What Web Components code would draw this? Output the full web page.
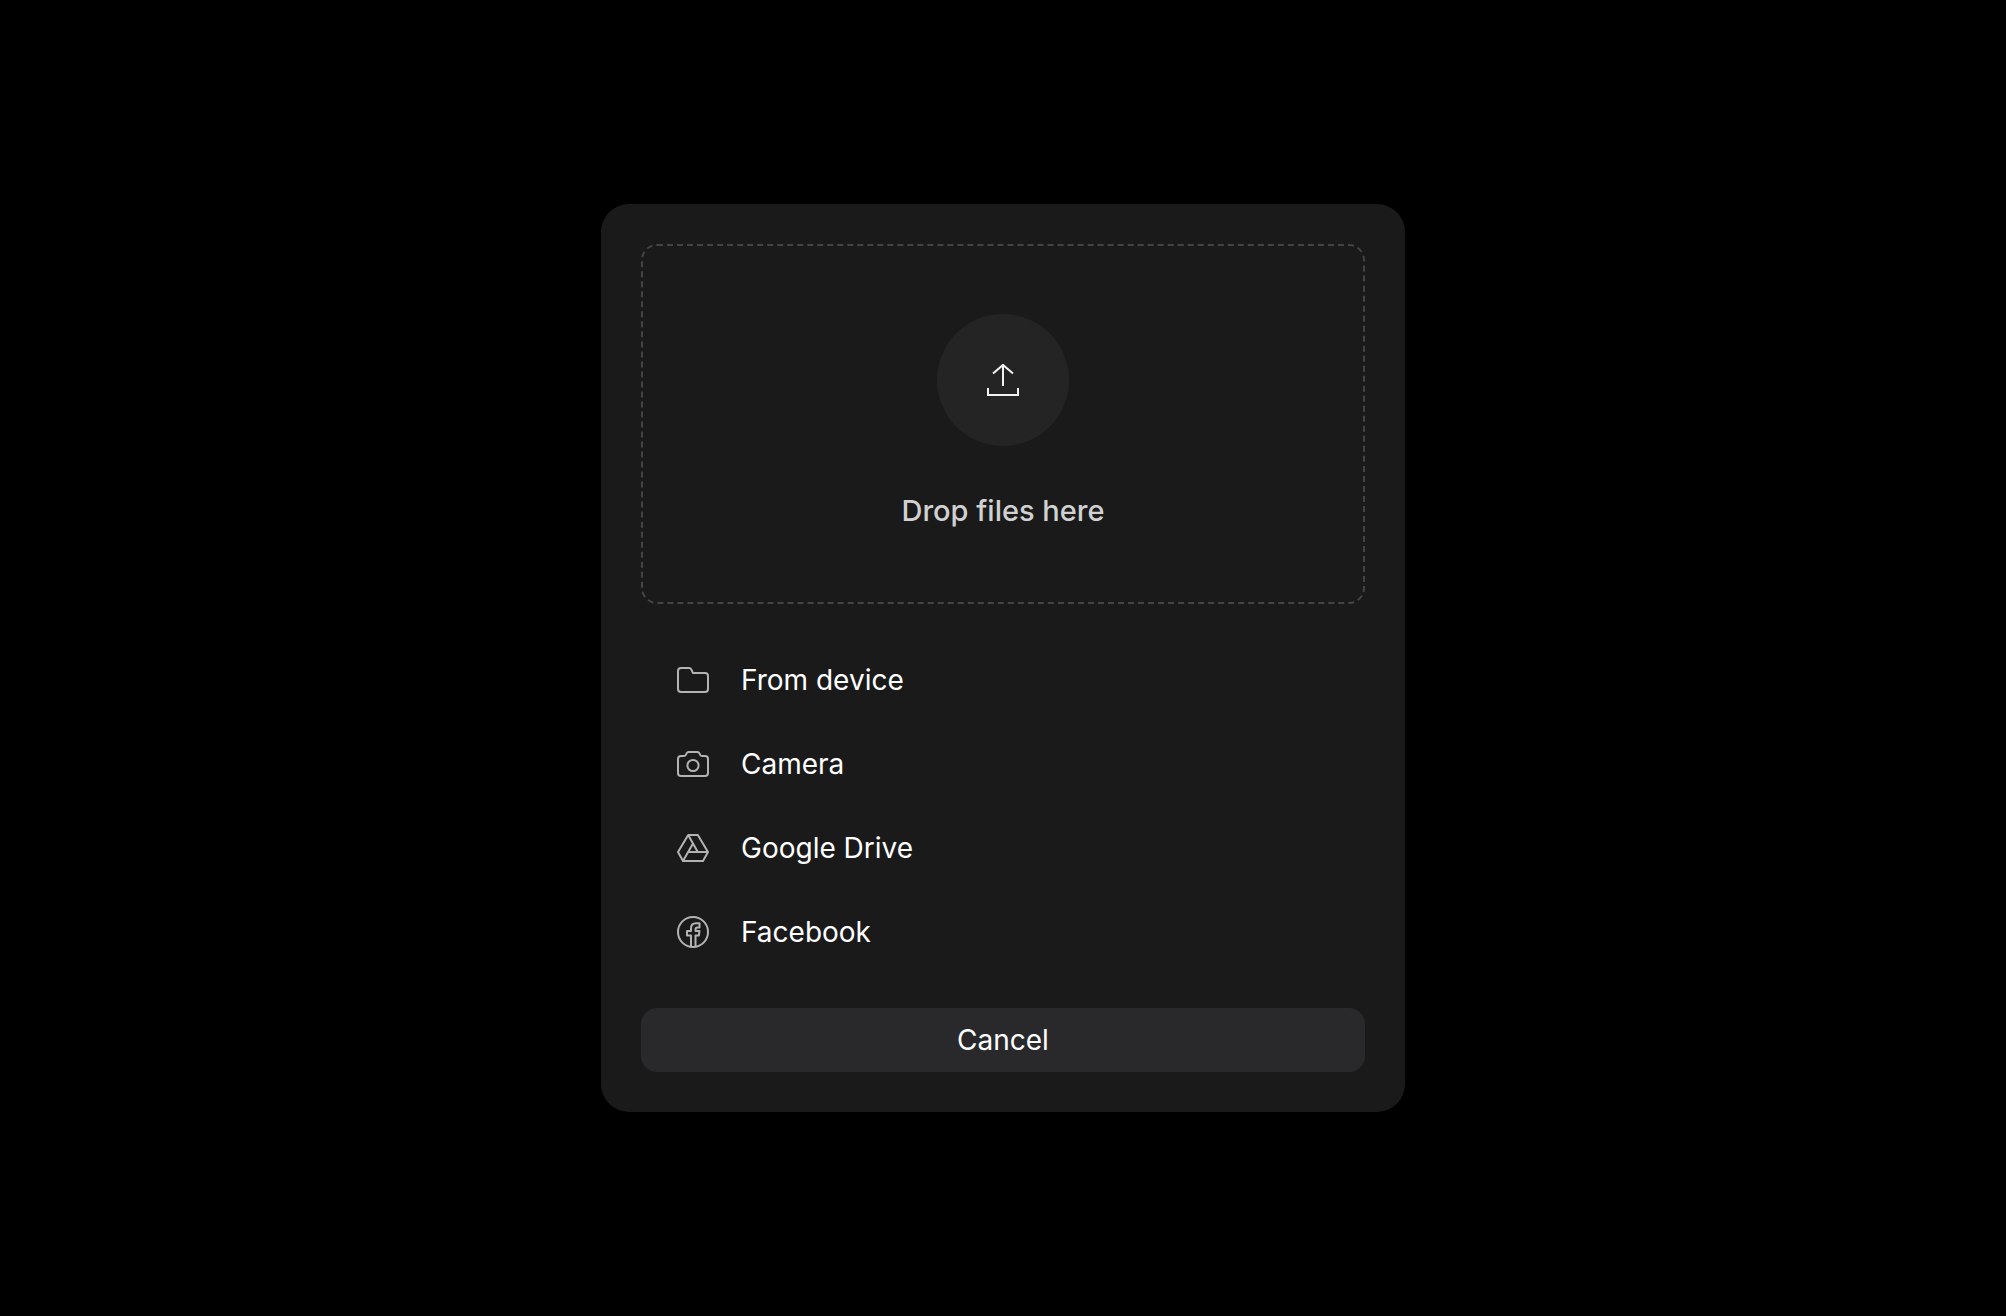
<!DOCTYPE html>
<html lang="en">
<head>
<meta charset="utf-8">
<meta name="viewport" content="width=device-width, initial-scale=1">
<title>File uploader</title>
<style>
  body {
    margin: 0;
    background-color: #000;
    color: #fff;
    font-family: Inter, "Liberation Sans", sans-serif;
  }
</style>
</head>
<body>
<upload-dialog>
  <drop-area>Drop files here</drop-area>
  <source-list slot="sources">
    <source-button icon="device">From device</source-button>
    <source-button icon="camera">Camera</source-button>
    <source-button icon="gdrive">Google Drive</source-button>
    <source-button icon="facebook">Facebook</source-button>
  </source-list>
  <cancel-button slot="footer">Cancel</cancel-button>
</upload-dialog>

<script>
const icons = {
  upload: '<path d="M16 22V1M6 9.500l10-8.600 10 8.600M1 24v7h30v-7"/>',
  device: '<path d="M4 4h8.3a2 2 0 0 1 1.8 1.1L16 9h12a3 3 0 0 1 3 3v13a3 3 0 0 1-3 3H4a3 3 0 0 1-3-3V7a3 3 0 0 1 3-3z"/>',
  camera: '<path d="M4 8h3a2 2 0 0 0 1.8-1.1l.9-1.8A2 2 0 0 1 11.5 4h9a2 2 0 0 1 1.8 1.1l.9 1.8A2 2 0 0 0 25 8h3a3 3 0 0 1 3 3v14a3 3 0 0 1-3 3H4a3 3 0 0 1-3-3V11a3 3 0 0 1 3-3z"/><circle cx="16" cy="17.5" r="5.6"/>',
  gdrive: '<path d="M11.2 3h9.6L31 20l-5 9H6l-5-9zM11.2 3l9.600 17M16 11.500 6 29M31 20H11.200"/>',
  facebook: '<circle cx="16" cy="16" r="15"/><path d="M14 30.500V19.500h-4V15h4v-2.500c0-3.500 2-5.200 5-5.200h3.500v4.200H20.500c-1.300 0-2 .7-2 2V15H22.500l-.7 4.500h-3.300v11"/>'
};

function drawIcon(name) {
  return `<svg viewBox="0 0 32 32" width="32" height="32" aria-hidden="true">${icons[name]}</svg>`;
}

class UploadDialog extends HTMLElement {
  constructor() {
    super();
    this.attachShadow({ mode: 'open' });
    this.shadowRoot.innerHTML = `<style>
  :host {
    align-items: center;
    box-sizing: border-box;
    display: flex;
    justify-content: center;
    min-height: 100vh;
    padding: 40px;
  }

  .dialog {
    background-color: #1a1a1a;
    border-radius: 28px;
    box-sizing: border-box;
    display: flex;
    flex-direction: column;
    gap: 36px;
    max-width: 804px;
    padding: 40px;
    width: 100%;
  }
  </style>
    <main class="dialog">
      <slot></slot>
      <slot name="sources"></slot>
      <slot name="footer"></slot>
    </main>`;
  }
}

/* Dashed area that takes the dropped files */
class DropArea extends HTMLElement {
  constructor() {
    super();
    this.attachShadow({ mode: 'open' });
    this.shadowRoot.innerHTML = `<style>
  :host {
    align-items: center;
    border: 2px dashed #444;
    border-radius: 16px;
    box-sizing: border-box;
    color: #d1d1d1;
    display: flex;
    flex-direction: column;
    gap: 44px;
    padding: 68px 20px 70px;
  }

  :host(.over) {
    border-color: #999;
  }

  .circle {
    align-items: center;
    background-color: #242424;
    border-radius: 50%;
    display: flex;
    height: 132px;
    justify-content: center;
    width: 132px;
  }

  svg {
    fill: none;
    stroke: #f2f2f2;
    stroke-width: 2;
  }

  .text {
    font-size: 29px;
    font-weight: 500;
    line-height: 42px;
  }
  </style>
    <div class="circle">${drawIcon('upload')}</div>
    <div class="text"><slot></slot></div>`;
  }

  connectedCallback() {
    this.addEventListener('dragover', event => {
      event.preventDefault();
      this.classList.add('over');
    });
    this.addEventListener('dragleave', () => this.classList.remove('over'));
    this.addEventListener('drop', event => {
      event.preventDefault();
      this.classList.remove('over');
    });
  }
}

class SourceList extends HTMLElement {
  constructor() {
    super();
    this.attachShadow({ mode: 'open' });
    this.shadowRoot.innerHTML = `<style>
  :host {
    display: flex;
    flex-direction: column;
    gap: 4px;
  }
  </style>
    <slot></slot>`;
  }
}

class SourceButton extends HTMLElement {
  constructor() {
    super();
    this.attachShadow({ mode: 'open' });
    this.shadowRoot.innerHTML = `<style>
  :host {
    display: block;
  }

  button {
    align-items: center;
    background: none;
    border: none;
    border-radius: 16px;
    color: inherit;
    cursor: pointer;
    display: flex;
    font-family: inherit;
    font-size: 28px;
    gap: 32px;
    height: 80px;
    padding: 0 36px;
    text-align: left;
    width: 100%;
  }

  button:hover {
    background-color: #242424;
  }

  svg {
    fill: none;
    stroke: #b3b3b3;
    stroke-linejoin: round;
    stroke-width: 2;
  }
  </style>
    <button type="button">${drawIcon(this.getAttribute('icon'))}<span><slot></slot></span></button>`;
  }
}

class CancelButton extends HTMLElement {
  constructor() {
    super();
    this.attachShadow({ mode: 'open' });
    this.shadowRoot.innerHTML = `<style>
  :host {
    display: block;
  }

  button {
    background-color: #29292b;
    border: none;
    border-radius: 16px;
    color: inherit;
    cursor: pointer;
    font-family: inherit;
    font-size: 28px;
    height: 64px;
    width: 100%;
  }

  button:hover {
    background-color: #333335;
  }
  </style>
    <button type="button"><slot></slot></button>`;
  }
}

customElements.define('upload-dialog', UploadDialog);
customElements.define('drop-area', DropArea);
customElements.define('source-list', SourceList);
customElements.define('source-button', SourceButton);
customElements.define('cancel-button', CancelButton);
</script>
</body>
</html>
